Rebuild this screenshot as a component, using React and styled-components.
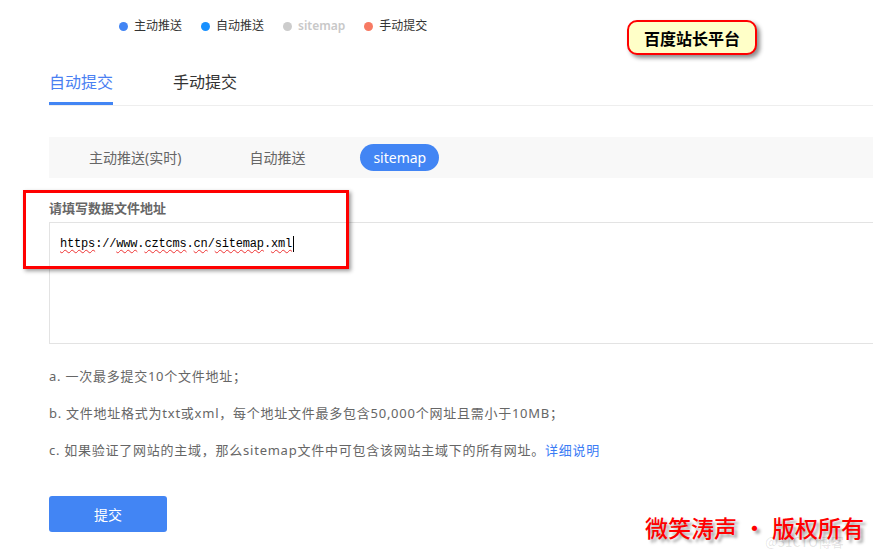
import React from 'react'
import styled, { createGlobalStyle } from 'styled-components'

const GlobalStyle = createGlobalStyle`
  body {
    margin: 0;
    background: #fff;
    font-family: "Noto Sans", "Noto Sans CJK SC", sans-serif;
  }
`;

const legend = [
  { label: '主动推送', color: '#4285f4' },
  { label: '自动推送', color: '#1890ff' },
  { label: 'sitemap', color: '#cccccc', muted: true },
  { label: '手动提交', color: '#f77a63' },
];

function App() {
  return (
    <Page>
      <GlobalStyle />
      <Legend>
        {legend.map((item) => (
          <LegendItem key={item.label} $muted={item.muted}>
            <Dot $color={item.color} />
            {item.label}
          </LegendItem>
        ))}
      </Legend>

      <Tabs>
        <Tab $active>自动提交</Tab>
        <Tab>手动提交</Tab>
      </Tabs>

      <Segments>
        <Segment>主动推送(实时)</Segment>
        <Segment>自动推送</Segment>
        <Segment $active>sitemap</Segment>
      </Segments>

      <Label>请填写数据文件地址</Label>
      <InputBox>
        <Typo>https</Typo>://<Typo>www</Typo>.<Typo>cztcms</Typo>.<Typo>cn</Typo>/<Typo>sitemap</Typo>.<Typo>xml</Typo>
        <Caret />
      </InputBox>

      <Notes>
        <li>a. 一次最多提交10个文件地址；</li>
        <li>b. 文件地址格式为txt或xml，每个地址文件最多包含50,000个网址且需小于10MB；</li>
        <li>
          c. 如果验证了网站的主域，那么sitemap文件中可包含该网站主域下的所有网址。
          <Link>详细说明</Link>
        </li>
      </Notes>

      <SubmitButton>提交</SubmitButton>

      <Callout>百度站长平台</Callout>
      <Highlight />
      <Watermark>
        微笑涛声<Sep>·</Sep>版权所有
        <Faint>@51CTO博客</Faint>
      </Watermark>
    </Page>
  )
}

export default App;

const Page = styled.div`
  position: relative;
  width: 873px;
  height: 555px;
  overflow: hidden;
  padding-left: 49px;
  box-sizing: border-box;
`;

const Legend = styled.div`
  display: flex;
  gap: 19px;
  padding-top: 18px;
  margin-left: 70px;
  height: 16px;
`;

const LegendItem = styled.div`
  display: flex;
  align-items: center;
  gap: 6px;
  font-size: 12px;
  line-height: 16px;
  color: ${(p) => (p.$muted ? '#c8c8c8' : '#333')};
  font-weight: ${(p) => (p.$muted ? 600 : 400)};
`;

const Dot = styled.span`
  width: 9px;
  height: 9px;
  border-radius: 50%;
  background: ${(p) => p.$color};
`;

const Tabs = styled.div`
  display: flex;
  gap: 60px;
  margin-top: 37px;
  border-bottom: 1px solid #eeeeee;
`;

const Tab = styled.div`
  font-size: 16px;
  line-height: 22px;
  padding-bottom: 9px;
  border-bottom: 3px solid ${(p) => (p.$active ? '#4285f4' : 'transparent')};
  color: ${(p) => (p.$active ? '#4a7ff2' : '#333')};
`;

const Segments = styled.div`
  display: flex;
  align-items: center;
  gap: 42px;
  margin-top: 31px;
  height: 41px;
  padding-left: 27px;
  background: #f8f8f8;
`;

const Segment = styled.div`
  height: 27px;
  line-height: 27px;
  padding: 0 13px;
  border-radius: 14px;
  font-size: 14px;
  color: ${(p) => (p.$active ? '#fff' : '#666')};
  background: ${(p) => (p.$active ? '#4285f4' : 'transparent')};
`;

const Label = styled.div`
  margin-top: 22px;
  font-size: 13px;
  line-height: 16px;
  font-weight: 700;
  color: #666;
`;

const InputBox = styled.div`
  margin-top: 6px;
  width: 860px;
  height: 122px;
  box-sizing: border-box;
  border: 1px solid #e3e3e3;
  padding: 13px 10px;
  font-family: "Liberation Mono", "DejaVu Sans Mono", monospace;
  font-size: 12px;
  letter-spacing: -0.17px;
  line-height: 16px;
  color: #000;
  display: flex;
  align-items: flex-start;
`;

const Typo = styled.span`
  text-decoration: underline wavy #e33;
  text-decoration-thickness: 1px;
  text-underline-offset: 2px;
`;

const Caret = styled.span`
  width: 1px;
  height: 16px;
  background: #000;
  margin-left: 1px;
`;

const Notes = styled.ul`
  list-style: none;
  margin: 14px 0 0;
  padding: 0;
  font-size: 13px;
  letter-spacing: 0.75px;
  line-height: 37px;
  color: #666;
`;

const Link = styled.span`
  color: #3b7cf5;
`;

const SubmitButton = styled.button`
  display: block;
  margin-top: 27px;
  width: 118px;
  height: 36px;
  border: none;
  border-radius: 3px;
  background: #4285f4;
  color: #fff;
  font-family: "Noto Sans CJK SC", sans-serif;
  font-size: 14px;
`;

const Callout = styled.div`
  position: absolute;
  left: 627px;
  top: 20px;
  width: 130px;
  height: 35px;
  box-sizing: border-box;
  border: 2px solid #f00;
  border-radius: 10px;
  background: #ffffc8;
  box-shadow: 3px 3px 4px rgba(0, 0, 0, 0.45);
  display: flex;
  align-items: center;
  justify-content: center;
  font-family: "Noto Sans CJK SC", sans-serif;
  font-weight: 700;
  font-size: 16px;
  color: #000;
`;

const Highlight = styled.div`
  position: absolute;
  left: 23px;
  top: 190px;
  width: 326px;
  height: 79px;
  box-sizing: border-box;
  border: 3px solid #f00;
  box-shadow: 2px 2px 4px rgba(0, 0, 0, 0.4);
`;

const Watermark = styled.div`
  position: absolute;
  left: 645px;
  top: 512px;
  font-family: "Noto Sans CJK SC", sans-serif;
  font-size: 23px;
  font-weight: 500;
  line-height: 30px;
  color: #f00;
  white-space: nowrap;
  text-shadow: 3px 3px 3px rgba(0, 0, 0, 0.35);
`;

const Sep = styled.span`
  margin: 0 6px;
`;

const Faint = styled.span`
  position: absolute;
  left: 120px;
  top: 15px;
  font-size: 13px;
  color: rgba(0, 0, 0, 0.1);
  text-shadow: none;
  z-index: -1;
`;
